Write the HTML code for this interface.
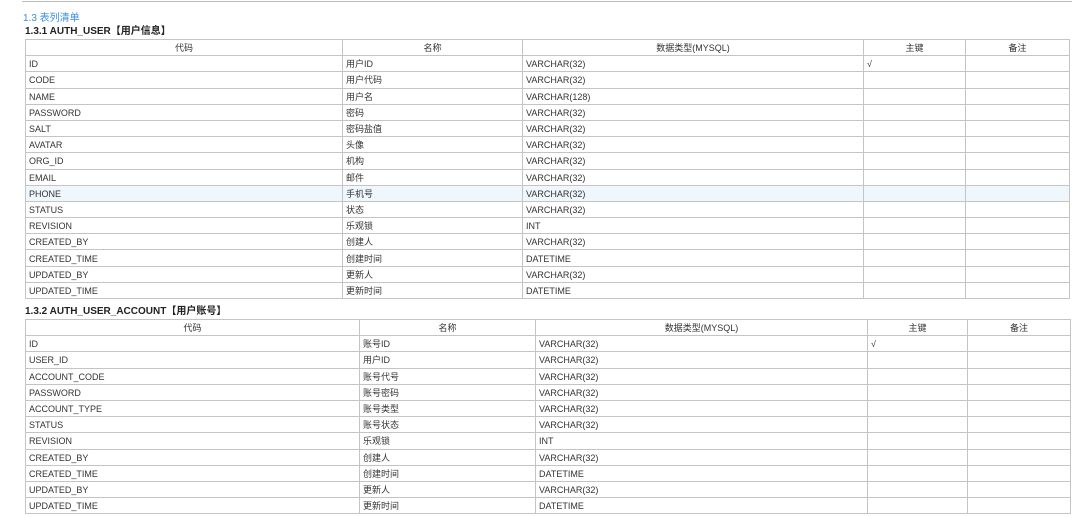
<!DOCTYPE html>
<html><head><meta charset="utf-8"><style>
body{margin:0;width:1080px;height:517px;background:#fff;overflow:hidden;font-family:"Liberation Sans","Noto Sans CJK SC",sans-serif;color:#333;position:relative}
.line{position:absolute;left:22px;top:1px;width:1050px;height:1px;background:#bbb}
.h1{position:absolute;left:23px;top:9px;font-size:10px;color:#3a8ee6}
.h2{position:absolute;left:25px;font-size:10px;font-weight:bold;color:#222}
table{position:absolute;left:25px;border-collapse:collapse;font-size:9px;table-layout:fixed}
td{border:1px solid #c4c4c4;height:16.2px;padding:1px 0 0 3px;line-height:14px;white-space:nowrap;overflow:hidden;box-sizing:border-box}
tr.h td{text-align:center;padding:1px 0 0 0}
tr.hl td{background:#eef7fc}
</style></head><body>
<div class="line"></div>
<div class="h1">1.3 表列清单</div>
<div class="h2" style="top:22px">1.3.1 AUTH_USER【用户信息】</div>
<table style="top:39px;width:1045px">
<colgroup><col style="width:317px"><col style="width:180px"><col style="width:341px"><col style="width:102px"><col style="width:104px"></colgroup>
<tr class="h"><td>代码</td><td>名称</td><td>数据类型(MYSQL)</td><td>主键</td><td>备注</td></tr>
<tr><td>ID</td><td>用户ID</td><td>VARCHAR(32)</td><td>√</td><td></td></tr>
<tr><td>CODE</td><td>用户代码</td><td>VARCHAR(32)</td><td></td><td></td></tr>
<tr><td>NAME</td><td>用户名</td><td>VARCHAR(128)</td><td></td><td></td></tr>
<tr><td>PASSWORD</td><td>密码</td><td>VARCHAR(32)</td><td></td><td></td></tr>
<tr><td>SALT</td><td>密码盐值</td><td>VARCHAR(32)</td><td></td><td></td></tr>
<tr><td>AVATAR</td><td>头像</td><td>VARCHAR(32)</td><td></td><td></td></tr>
<tr><td>ORG_ID</td><td>机构</td><td>VARCHAR(32)</td><td></td><td></td></tr>
<tr><td>EMAIL</td><td>邮件</td><td>VARCHAR(32)</td><td></td><td></td></tr>
<tr class="hl"><td>PHONE</td><td>手机号</td><td>VARCHAR(32)</td><td></td><td></td></tr>
<tr><td>STATUS</td><td>状态</td><td>VARCHAR(32)</td><td></td><td></td></tr>
<tr><td>REVISION</td><td>乐观锁</td><td>INT</td><td></td><td></td></tr>
<tr><td>CREATED_BY</td><td>创建人</td><td>VARCHAR(32)</td><td></td><td></td></tr>
<tr><td>CREATED_TIME</td><td>创建时间</td><td>DATETIME</td><td></td><td></td></tr>
<tr><td>UPDATED_BY</td><td>更新人</td><td>VARCHAR(32)</td><td></td><td></td></tr>
<tr><td>UPDATED_TIME</td><td>更新时间</td><td>DATETIME</td><td></td><td></td></tr>
</table>
<div class="h2" style="top:302px">1.3.2 AUTH_USER_ACCOUNT【用户账号】</div>
<table style="top:319px;width:1045px">
<colgroup><col style="width:334px"><col style="width:176px"><col style="width:332px"><col style="width:100px"><col style="width:103px"></colgroup>
<tr class="h"><td>代码</td><td>名称</td><td>数据类型(MYSQL)</td><td>主键</td><td>备注</td></tr>
<tr><td>ID</td><td>账号ID</td><td>VARCHAR(32)</td><td>√</td><td></td></tr>
<tr><td>USER_ID</td><td>用户ID</td><td>VARCHAR(32)</td><td></td><td></td></tr>
<tr><td>ACCOUNT_CODE</td><td>账号代号</td><td>VARCHAR(32)</td><td></td><td></td></tr>
<tr><td>PASSWORD</td><td>账号密码</td><td>VARCHAR(32)</td><td></td><td></td></tr>
<tr><td>ACCOUNT_TYPE</td><td>账号类型</td><td>VARCHAR(32)</td><td></td><td></td></tr>
<tr><td>STATUS</td><td>账号状态</td><td>VARCHAR(32)</td><td></td><td></td></tr>
<tr><td>REVISION</td><td>乐观锁</td><td>INT</td><td></td><td></td></tr>
<tr><td>CREATED_BY</td><td>创建人</td><td>VARCHAR(32)</td><td></td><td></td></tr>
<tr><td>CREATED_TIME</td><td>创建时间</td><td>DATETIME</td><td></td><td></td></tr>
<tr><td>UPDATED_BY</td><td>更新人</td><td>VARCHAR(32)</td><td></td><td></td></tr>
<tr><td>UPDATED_TIME</td><td>更新时间</td><td>DATETIME</td><td></td><td></td></tr>
</table>
</body></html>
